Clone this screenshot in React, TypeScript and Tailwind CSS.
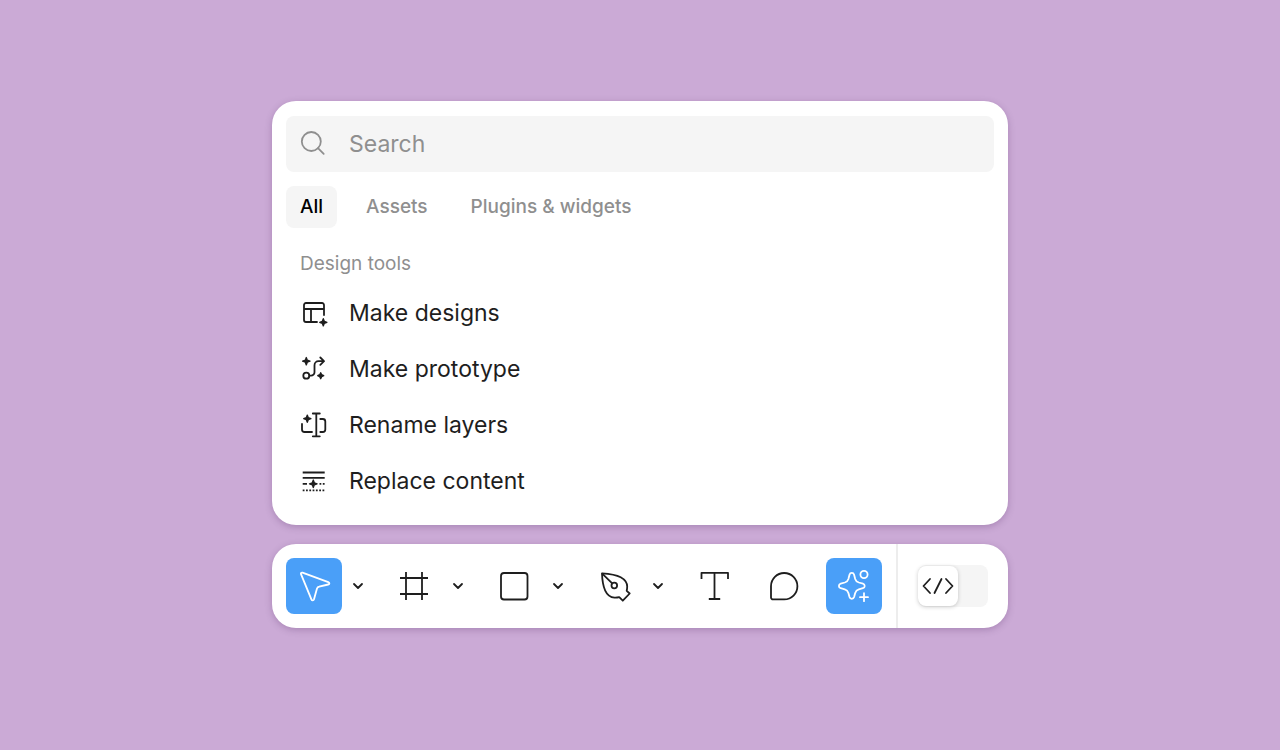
import { useState } from 'react'
import type { ReactNode } from 'react'

function Icon({ size = 36, stroke = 1.8, children }: { size?: number; stroke?: number; children: ReactNode }) {
  return (
    <svg
      width={size}
      height={size}
      viewBox={`0 0 ${size} ${size}`}
      fill="none"
      stroke="currentColor"
      strokeWidth={stroke}
      strokeLinecap="round"
      strokeLinejoin="round"
      className="shrink-0"
      aria-hidden="true"
    >
      {children}
    </svg>
  )
}

// Small filled four-pointed sparkle, centred on x / y
function Spark({ x, y, r }: { x: number; y: number; r: number }) {
  const n = 1
  return (
    <path
      fill="currentColor"
      strokeWidth="1.3"
      d={`M${x} ${y - r}L${x + n} ${y - n}L${x + r} ${y}L${x + n} ${y + n}L${x} ${y + r}L${x - n} ${y + n}L${x - r} ${y}L${x - n} ${y - n}Z`}
    />
  )
}

const tabs = ['All', 'Assets', 'Plugins & widgets']

const actions = [
  {
    label: 'Make designs',
    icon: (
      <Icon size={32}>
        <path d="M26 18V8A2 2 0 0 0 24 6H8A2 2 0 0 0 6 8v15A2 2 0 0 0 8 25H19M6 12h20M13 12v13" />
        <Spark x={25.3} y={25.3} r={3.6} />
      </Icon>
    ),
  },
  {
    label: 'Make prototype',
    icon: (
      <Icon size={32}>
        <circle cx="8.300" cy="22.700" r="3" />
        <path d="M11.500 22.700h1.500a3.500 3.500 0 0 0 3.500-3.500v-7a4 4 0 0 1 4-4H26M22.300 4.500 26 8.200l-3.700 3.600" />
        <Spark x={8.3} y={8.2} r={3.7} />
        <Spark x={22.7} y={22.7} r={3} />
      </Icon>
    ),
  },
  {
    label: 'Rename layers',
    icon: (
      <Icon size={32}>
        <path d="M18.300 4.500v22.800M14.800 4.500h7M14.800 27.300h7M4 15v5.500A2.500 2.500 0 0 0 6.500 23h7.500M22.300 10h2.500a2.500 2.500 0 0 1 2.500 2.500v8a2.500 2.500 0 0 1-2.500 2.500h-2.500" />
        <Spark x={9.3} y={9.7} r={3.6} />
      </Icon>
    ),
  },
  {
    label: 'Replace content',
    icon: (
      <Icon size={32}>
        <path strokeLinecap="butt" d="M4.700 7.500h22M4.700 12.800h22M4.700 18.800h4.300" />
        <path strokeLinecap="butt" strokeDasharray="1.800 1.500" d="M21.500 18.800h5.300M4.700 25.300h22" />
        <Spark x={15.3} y={18.8} r={3.8} />
      </Icon>
    ),
  },
]

const tools = [
  {
    name: 'Move',
    menu: true,
    icon: (
      <path d="M6.500 4.700 32.300 14.200c1.500.6 1.400 2-.1 2.300l-9 2.100a3 3 0 0 0-2.200 1.900l-3 10.700c-.5 1.600-2 1.600-2.600.1L5 6.200c-.4-1 .4-1.900 1.500-1.500Z" />
    ),
  },
  {
    name: 'Frame',
    menu: true,
    icon: <path strokeLinecap="butt" d="M10 4v28M26 4v28M4 10h28M4 26h28" />,
  },
  {
    name: 'Rectangle',
    menu: true,
    icon: <rect x="5" y="5" width="26.500" height="26.500" rx="3" />,
  },
  {
    name: 'Pen',
    menu: true,
    icon: (
      <>
        <path d="M6 5.300c8 .5 14.500 1.700 18.700 4 4.300 2.400 6.500 5.700 6.500 9.300 0 1.500-.2 2.900-.5 4.200l3 2.700-6.900 7.200-3.600-3.500c-1.500.4-3 .6-4.700.5-4-.2-7.200-2.500-9.300-7C7.200 18.200 6.200 12.500 6 5.300Z" />
        <path d="m6.500 5.800 9.700 9.600" />
        <circle cx="18.300" cy="17.500" r="2.800" />
      </>
    ),
  },
  {
    name: 'Text',
    icon: <path strokeLinecap="butt" d="M5.500 11V4.800h26.500V11M18.500 4.800V31M12.800 31h11.400" />,
  },
  {
    name: 'Comment',
    icon: <path d="M5 18.200a13.200 13.200 0 1 1 13.200 13.200H7a2 2 0 0 1-2-2Z" />,
  },
  {
    name: 'Actions',
    icon: (
      <>
        <path d="M13.500 6.700c.7-2.400 3.900-2.400 4.600 0l1.100 4.200a5.500 5.500 0 0 0 3.600 3.600l4.100 1.100c2.400.7 2.400 3.900 0 4.600l-4.100 1.100a5.500 5.500 0 0 0-3.600 3.600l-1.100 4.200c-.7 2.400-3.900 2.400-4.600 0l-1.100-4.200a5.500 5.500 0 0 0-3.600-3.600l-4.100-1.100c-2.400-.7-2.400-3.900 0-4.600l4.100-1.100a5.500 5.500 0 0 0 3.600-3.600Z" />
        <circle cx="28" cy="6.500" r="3.600" />
        <path d="M28 25.200v8M24 29.200h8" />
      </>
    ),
  },
]

function App() {
  const [tab, setTab] = useState('All')
  const [active, setActive] = useState(['Move', 'Actions'])
  const [query, setQuery] = useState('')
  const [devMode, setDevMode] = useState(false)

  const toggleTool = (name: string) => {
    if (name === 'Actions') {
      setActive(active.includes(name) ? active.filter((a) => a !== name) : [...active, name])
    } else {
      setActive([name, ...active.filter((a) => a === 'Actions')])
    }
  }

  return (
    <main className="flex min-h-screen flex-col items-center justify-center bg-[#cbaad6] px-4 pb-[21px] font-[Inter,sans-serif] text-[#1e1e1e]">
      <div className="flex w-full max-w-[736px] flex-col gap-[19px]">
        <section className="rounded-3xl bg-white px-[14px] pt-[15px] pb-4 shadow-[0_2px_7px_rgba(70,30,90,0.26)]">
          <label className="flex h-14 items-center gap-[19px] rounded-lg bg-[#f5f5f5] pl-3 text-[#8f8f8f]">
            <Icon size={32}>
              <circle cx="13.300" cy="13.500" r="9.500" />
              <path d="m20 20.200 5.700 5.700" />
            </Icon>
            <input
              type="text"
              value={query}
              onChange={(e) => setQuery(e.target.value)}
              placeholder="Search"
              aria-label="Search"
              className="min-w-0 flex-1 bg-transparent text-[23px] outline-none placeholder:text-[#8f8f8f]"
            />
          </label>

          <div className="mt-[14px] flex gap-[15px]" role="tablist">
            {tabs.map((t) => (
              <button
                key={t}
                type="button"
                role="tab"
                aria-selected={tab === t}
                onClick={() => setTab(t)}
                className={
                  tab === t
                    ? 'h-[42px] rounded-lg bg-[#f5f5f5] px-[14px] text-[19px] font-medium text-black'
                    : 'h-[42px] rounded-lg px-[14px] text-[19px] font-medium text-[#8f8f8f]'
                }
              >
                {t}
              </button>
            ))}
          </div>

          <h2 className="mt-[22px] px-[14px] text-[19px] leading-7 text-[#8f8f8f]">Design tools</h2>
          <ul className="mt-[7px]">
            {actions.map((a) => (
              <li key={a.label}>
                <button type="button" className="flex h-14 w-full items-center gap-[19px] rounded-lg pl-3 text-[23px]">
                  {a.icon}
                  {a.label}
                </button>
              </li>
            ))}
          </ul>
        </section>

        <section className="flex h-[84px] items-center rounded-3xl bg-white pl-[14px] shadow-[0_2px_7px_rgba(70,30,90,0.26)]">
          {tools.map((tool) => (
            <div key={tool.name} className={tool.menu ? 'mr-3 flex items-center' : 'mr-[14px] flex items-center'}>
              <button
                type="button"
                aria-label={tool.name}
                aria-pressed={active.includes(tool.name)}
                onClick={() => toggleTool(tool.name)}
                className={
                  active.includes(tool.name)
                    ? 'flex size-14 items-center justify-center rounded-lg bg-[#4a9ff8] text-white'
                    : 'flex size-14 items-center justify-center rounded-lg'
                }
              >
                <Icon>{tool.icon}</Icon>
              </button>
              {tool.menu ? (
                <button type="button" aria-label={`${tool.name} options`} className="flex h-14 w-8 items-center justify-center">
                  <Icon size={16}>
                    <path d="m4 6 4 4 4-4" />
                  </Icon>
                </button>
              ) : null}
            </div>
          ))}
          <div className="self-stretch border-l-2 border-[#ededed]" />
          <button
            type="button"
            role="switch"
            aria-label="Dev Mode"
            aria-checked={devMode}
            onClick={() => setDevMode(!devMode)}
            className={
              devMode
                ? 'ml-5 flex h-[42px] w-[70px] items-center justify-end rounded-lg bg-[#f5f5f5]'
                : 'ml-5 flex h-[42px] w-[70px] items-center rounded-lg bg-[#f5f5f5]'
            }
          >
            <span className="flex size-10 items-center justify-center rounded-lg bg-white shadow-[0_1px_4px_rgba(0,0,0,0.2)]">
              <Icon>
                <path d="m10 11-6.500 7 6.500 7M21.500 11l-7 14M26 11l6.500 7-6.500 7" />
              </Icon>
            </span>
          </button>
        </section>
      </div>
    </main>
  )
}

export default App
